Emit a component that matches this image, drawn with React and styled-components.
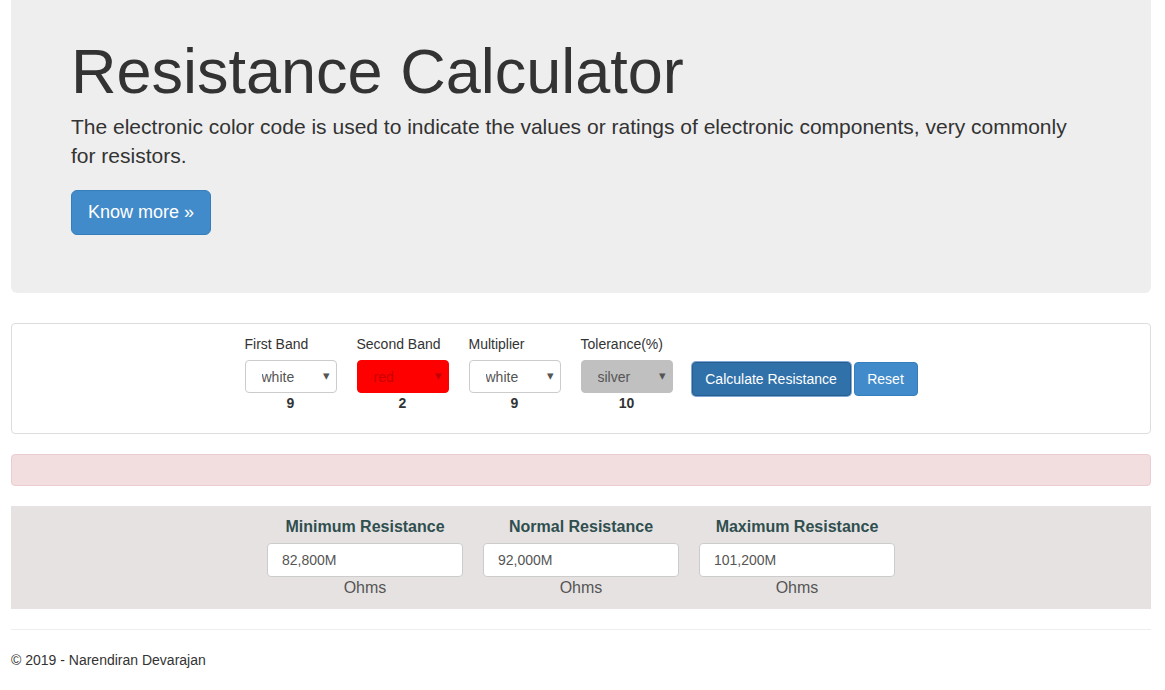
import React from "react";
import styled, { createGlobalStyle, css } from "styled-components";

const GlobalStyle = createGlobalStyle`
  * { box-sizing: border-box; }
  body {
    margin: 0;
    background: #fff;
    color: #333;
    font-family: "Liberation Sans", Arial, Helvetica, sans-serif;
    font-size: 14px;
    line-height: 1.42857;
  }
`;

const Container = styled.div`
  width: 1140px;
  margin-left: 11px;
`;

const Jumbotron = styled.div`
  background-color: #eee;
  border-radius: 0 0 6px 6px;
  padding: 37px 60px 58px;
  height: 293px;
`;

const Title = styled.h1`
  margin: 0 0 6px;
  font-size: 63px;
  font-weight: 400;
  line-height: 69px;
  color: #333;
`;

const Lead = styled.p`
  margin: 0 0 20px;
  font-size: 21px;
  line-height: 29px;
  color: #333;
`;

const Button = styled.button`
  display: inline-block;
  font-family: inherit;
  color: #fff;
  border: 1px solid #357ebd;
  background-color: #428bca;
  cursor: pointer;
  white-space: nowrap;
  ${(p) =>
    p.$large
      ? css`
          font-size: 18px;
          line-height: 1.33;
          padding: 10px 16px;
          border-radius: 6px;
          height: 45px;
        `
      : css`
          font-size: 14px;
          line-height: 20px;
          padding: 6px 0;
          border-radius: 4px;
          height: 34px;
        `}
  ${(p) =>
    p.$active &&
    css`
      background-color: #3071a9;
      border-color: #285e8e;
      box-shadow: 0 0 0 1px #7fa8d6;
    `}
  width: ${(p) => (p.$w ? `${p.$w}px` : "auto")};
`;

const FormPanel = styled.div`
  margin-top: 30px;
  height: 111px;
  border: 1px solid #ddd;
  border-radius: 4px;
  padding-top: 10px;
  display: flex;
  justify-content: center;
  gap: 20px;
`;

const BandColumn = styled.div`
  width: 92px;
  display: flex;
  flex-direction: column;
`;

const Label = styled.label`
  font-size: 14px;
  line-height: 20px;
  margin-bottom: 6px;
  color: #333;
  white-space: nowrap;
`;

const SelectWrap = styled.div`
  position: relative;
  height: 33px;
  &::after {
    content: "▾";
    position: absolute;
    right: 7px;
    top: 7px;
    font-size: 13px;
    color: ${(p) => p.$fg};
    pointer-events: none;
  }
`;

const Select = styled.select`
  appearance: none;
  -webkit-appearance: none;
  width: 100%;
  height: 33px;
  padding: 0 0 0 16px;
  font-family: inherit;
  font-size: 14px;
  color: ${(p) => p.$fg};
  background-color: ${(p) => p.$bg};
  border: 1px solid ${(p) => p.$border};
  border-radius: 4px;
  outline: none;
`;

const BandValue = styled.div`
  text-align: center;
  font-weight: 700;
  font-size: 14px;
  line-height: 20px;
  color: #333;
`;

const Actions = styled.div`
  display: flex;
  gap: 3px;
  margin-top: 28px;
  margin-left: -1px;
  align-self: flex-start;
`;

const Alert = styled.div`
  margin-top: 20px;
  height: 32px;
  background-color: #f2dede;
  border: 1px solid #ebccd1;
  border-radius: 4px;
`;

const Results = styled.div`
  margin-top: 20px;
  height: 103px;
  background-color: #e6e2e2;
  padding-top: 9px;
  display: flex;
  justify-content: center;
  gap: 20px;
`;

const ResultColumn = styled.div`
  width: 196px;
  display: flex;
  flex-direction: column;
  align-items: center;
`;

const ResultTitle = styled.div`
  font-size: 16px;
  font-weight: 700;
  line-height: 23px;
  color: #2f4f4f;
  margin-bottom: 5px;
  white-space: nowrap;
`;

const ResultInput = styled.input`
  width: 196px;
  height: 34px;
  padding: 0 14px;
  font-family: inherit;
  font-size: 14px;
  color: #555;
  background: #fff;
  border: 1px solid #ccc;
  border-radius: 4px;
  outline: none;
`;

const Unit = styled.div`
  font-size: 16px;
  line-height: 22px;
  color: #555;
`;

const Rule = styled.hr`
  margin: 20px 0;
  border: 0;
  border-top: 1px solid #eee;
`;

const Footer = styled.footer`
  font-size: 14px;
  line-height: 20px;
  color: #333;
  padding-bottom: 20px;
`;

const bands = [
  { label: "First Band", value: "white", num: "9", bg: "#fff", fg: "#555", border: "#ccc", arrow: "#555" },
  { label: "Second Band", value: "red", num: "2", bg: "#ff0000", fg: "#c80000", border: "#ff0000", arrow: "#c00000" },
  { label: "Multiplier", value: "white", num: "9", bg: "#fff", fg: "#555", border: "#ccc", arrow: "#555" },
  { label: "Tolerance(%)", value: "silver", num: "10", bg: "#c0c0c0", fg: "#555", border: "#c0c0c0", arrow: "#555" },
];

const results = [
  { title: "Minimum Resistance", value: "82,800M" },
  { title: "Normal Resistance", value: "92,000M" },
  { title: "Maximum Resistance", value: "101,200M" },
];

export default function App() {
  return (
    <>
      <GlobalStyle />
      <Container>
        <Jumbotron>
          <Title>Resistance Calculator</Title>
          <Lead>
            The electronic color code is used to indicate the values or ratings of electronic
            components, very commonly for resistors.
          </Lead>
          <Button $large>Know more »</Button>
        </Jumbotron>

        <FormPanel>
          {bands.map((b) => (
            <BandColumn key={b.label}>
              <Label>{b.label}</Label>
              <SelectWrap $fg={b.arrow}>
                <Select $bg={b.bg} $fg={b.fg} $border={b.border} defaultValue={b.value}>
                  <option value={b.value}>{b.value}</option>
                </Select>
              </SelectWrap>
              <BandValue>{b.num}</BandValue>
            </BandColumn>
          ))}
          <Actions>
            <Button $active $w={159}>Calculate Resistance</Button>
            <Button $w={64}>Reset</Button>
          </Actions>
        </FormPanel>

        <Alert />

        <Results>
          {results.map((r) => (
            <ResultColumn key={r.title}>
              <ResultTitle>{r.title}</ResultTitle>
              <ResultInput readOnly value={r.value} />
              <Unit>Ohms</Unit>
            </ResultColumn>
          ))}
        </Results>

        <Rule />
        <Footer>© 2019 - Narendiran Devarajan</Footer>
      </Container>
    </>
  );
}
